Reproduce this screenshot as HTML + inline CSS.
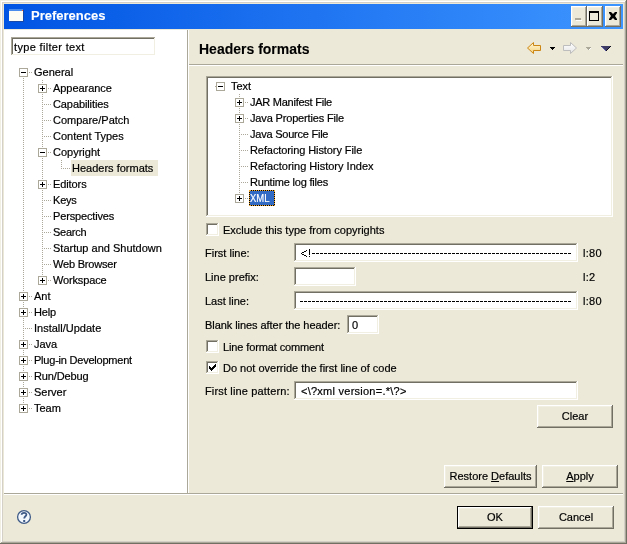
<!DOCTYPE html>
<html><head><meta charset="utf-8"><style>
html,body{margin:0;padding:0;}
body{width:627px;height:544px;position:relative;overflow:hidden;background:#ECE9D8;font-family:"Liberation Sans",sans-serif;}
body>div,body>span,body>svg{position:absolute;box-sizing:border-box;}
body>div{box-sizing:content-box;}
.tl{position:absolute;left:0;top:0;width:627px;height:544px;will-change:transform;}
.tl>span{position:absolute;}
.t{-webkit-text-stroke:0.2px currentColor;white-space:pre;line-height:16px;font-size:11px;color:#000;}
.btn{text-align:center;}
u{text-decoration:underline;text-underline-offset:1px;}
</style></head><body>
<div style="left:0px;top:0px;width:627px;height:544px;background:#716F64;"></div><div style="left:0px;top:0px;width:626px;height:543px;background:#F1EFE2;"></div><div style="left:1px;top:1px;width:625px;height:542px;background:#ACA899;"></div><div style="left:1px;top:1px;width:624px;height:541px;background:#FFFFFF;"></div><div style="left:2px;top:2px;width:623px;height:540px;background:#D4D0C8;"></div><div style="left:3px;top:3px;width:621px;height:538px;background:#ECE9D8;"></div><div style="left:4px;top:4px;width:619px;height:25px;background:#0054E3;background:linear-gradient(to right,#0054E3,#3D95FF);"></div><div style="left:10px;top:10px;width:14px;height:12px;background:#1848A8;"></div><div style="left:9px;top:9px;width:14px;height:2px;background:#4A8CEC;"></div><div style="left:9px;top:11px;width:14px;height:10px;background:#FDFDF6;"></div><div style="left:22px;top:10px;width:1px;height:1px;background:#F06030;"></div><div style="left:571px;top:6px;width:16px;height:21px;background:#716F64;"></div><div style="left:571px;top:6px;width:15px;height:20px;background:#FFFFFF;"></div><div style="left:572px;top:7px;width:14px;height:19px;background:#ACA899;"></div><div style="left:572px;top:7px;width:13px;height:18px;background:#F1EFE2;"></div><div style="left:573px;top:8px;width:12px;height:17px;background:#ECE9D8;"></div><div style="left:587px;top:6px;width:16px;height:21px;background:#716F64;"></div><div style="left:587px;top:6px;width:15px;height:20px;background:#FFFFFF;"></div><div style="left:588px;top:7px;width:14px;height:19px;background:#ACA899;"></div><div style="left:588px;top:7px;width:13px;height:18px;background:#F1EFE2;"></div><div style="left:589px;top:8px;width:12px;height:17px;background:#ECE9D8;"></div><div style="left:605px;top:6px;width:16px;height:21px;background:#716F64;"></div><div style="left:605px;top:6px;width:15px;height:20px;background:#FFFFFF;"></div><div style="left:606px;top:7px;width:14px;height:19px;background:#ACA899;"></div><div style="left:606px;top:7px;width:13px;height:18px;background:#F1EFE2;"></div><div style="left:607px;top:8px;width:12px;height:17px;background:#ECE9D8;"></div><div style="left:575px;top:18px;width:6px;height:2px;background:#ACA899;"></div><div style="left:576px;top:20px;width:6px;height:1px;background:#FFFFFF;"></div><div style="left:589px;top:11px;width:8px;height:7px;border:1px solid #000;border-top-width:2px;"></div><svg style="position:absolute;left:609px;top:12px" width="8" height="8" viewBox="0 0 8 8"><path d="M0 0h2l2 2 2-2h2v1L6 4l2 3v1H6L4 6 2 8H0V7l2-3-2-3z" fill="#000"/></svg><div style="left:4px;top:30px;width:183px;height:463px;background:#fff;"></div><div style="left:187px;top:30px;width:1px;height:463px;background:#ACA899;"></div><div style="left:188px;top:30px;width:1px;height:463px;background:#FFFFFF;"></div><div style="left:4px;top:493px;width:619px;height:1px;background:#ACA899;"></div><div style="left:4px;top:494px;width:619px;height:1px;background:#FFFFFF;"></div><div style="left:11px;top:37px;width:145px;height:19px;background:#FFFFFF;"></div><div style="left:11px;top:37px;width:144px;height:1px;background:#ACA899;"></div><div style="left:11px;top:37px;width:1px;height:18px;background:#ACA899;"></div><div style="left:12px;top:38px;width:143px;height:17px;background:#F1EFE2;"></div><div style="left:12px;top:38px;width:142px;height:1px;background:#716F64;"></div><div style="left:12px;top:38px;width:1px;height:16px;background:#716F64;"></div><div style="left:13px;top:39px;width:141px;height:15px;background:#fff;"></div><svg style="position:absolute;left:0;top:0" width="627" height="544" viewBox="0 0 627 544" shape-rendering="crispEdges"><path d="M23 72h1v1h-1zM23 74h1v1h-1zM23 76h1v1h-1zM23 78h1v1h-1zM23 80h1v1h-1zM23 82h1v1h-1zM23 84h1v1h-1zM23 86h1v1h-1zM23 88h1v1h-1zM23 90h1v1h-1zM23 92h1v1h-1zM23 94h1v1h-1zM23 96h1v1h-1zM23 98h1v1h-1zM23 100h1v1h-1zM23 102h1v1h-1zM23 104h1v1h-1zM23 106h1v1h-1zM23 108h1v1h-1zM23 110h1v1h-1zM23 112h1v1h-1zM23 114h1v1h-1zM23 116h1v1h-1zM23 118h1v1h-1zM23 120h1v1h-1zM23 122h1v1h-1zM23 124h1v1h-1zM23 126h1v1h-1zM23 128h1v1h-1zM23 130h1v1h-1zM23 132h1v1h-1zM23 134h1v1h-1zM23 136h1v1h-1zM23 138h1v1h-1zM23 140h1v1h-1zM23 142h1v1h-1zM23 144h1v1h-1zM23 146h1v1h-1zM23 148h1v1h-1zM23 150h1v1h-1zM23 152h1v1h-1zM23 154h1v1h-1zM23 156h1v1h-1zM23 158h1v1h-1zM23 160h1v1h-1zM23 162h1v1h-1zM23 164h1v1h-1zM23 166h1v1h-1zM23 168h1v1h-1zM23 170h1v1h-1zM23 172h1v1h-1zM23 174h1v1h-1zM23 176h1v1h-1zM23 178h1v1h-1zM23 180h1v1h-1zM23 182h1v1h-1zM23 184h1v1h-1zM23 186h1v1h-1zM23 188h1v1h-1zM23 190h1v1h-1zM23 192h1v1h-1zM23 194h1v1h-1zM23 196h1v1h-1zM23 198h1v1h-1zM23 200h1v1h-1zM23 202h1v1h-1zM23 204h1v1h-1zM23 206h1v1h-1zM23 208h1v1h-1zM23 210h1v1h-1zM23 212h1v1h-1zM23 214h1v1h-1zM23 216h1v1h-1zM23 218h1v1h-1zM23 220h1v1h-1zM23 222h1v1h-1zM23 224h1v1h-1zM23 226h1v1h-1zM23 228h1v1h-1zM23 230h1v1h-1zM23 232h1v1h-1zM23 234h1v1h-1zM23 236h1v1h-1zM23 238h1v1h-1zM23 240h1v1h-1zM23 242h1v1h-1zM23 244h1v1h-1zM23 246h1v1h-1zM23 248h1v1h-1zM23 250h1v1h-1zM23 252h1v1h-1zM23 254h1v1h-1zM23 256h1v1h-1zM23 258h1v1h-1zM23 260h1v1h-1zM23 262h1v1h-1zM23 264h1v1h-1zM23 266h1v1h-1zM23 268h1v1h-1zM23 270h1v1h-1zM23 272h1v1h-1zM23 274h1v1h-1zM23 276h1v1h-1zM23 278h1v1h-1zM23 280h1v1h-1zM23 282h1v1h-1zM23 284h1v1h-1zM23 286h1v1h-1zM23 288h1v1h-1zM23 290h1v1h-1zM23 292h1v1h-1zM23 294h1v1h-1zM23 296h1v1h-1zM23 298h1v1h-1zM23 300h1v1h-1zM23 302h1v1h-1zM23 304h1v1h-1zM23 306h1v1h-1zM23 308h1v1h-1zM23 310h1v1h-1zM23 312h1v1h-1zM23 314h1v1h-1zM23 316h1v1h-1zM23 318h1v1h-1zM23 320h1v1h-1zM23 322h1v1h-1zM23 324h1v1h-1zM23 326h1v1h-1zM23 328h1v1h-1zM23 330h1v1h-1zM23 332h1v1h-1zM23 334h1v1h-1zM23 336h1v1h-1zM23 338h1v1h-1zM23 340h1v1h-1zM23 342h1v1h-1zM23 344h1v1h-1zM23 346h1v1h-1zM23 348h1v1h-1zM23 350h1v1h-1zM23 352h1v1h-1zM23 354h1v1h-1zM23 356h1v1h-1zM23 358h1v1h-1zM23 360h1v1h-1zM23 362h1v1h-1zM23 364h1v1h-1zM23 366h1v1h-1zM23 368h1v1h-1zM23 370h1v1h-1zM23 372h1v1h-1zM23 374h1v1h-1zM23 376h1v1h-1zM23 378h1v1h-1zM23 380h1v1h-1zM23 382h1v1h-1zM23 384h1v1h-1zM23 386h1v1h-1zM23 388h1v1h-1zM23 390h1v1h-1zM23 392h1v1h-1zM23 394h1v1h-1zM23 396h1v1h-1zM23 398h1v1h-1zM23 400h1v1h-1zM23 402h1v1h-1zM23 404h1v1h-1zM23 406h1v1h-1zM23 408h1v1h-1zM42 80h1v1h-1zM42 82h1v1h-1zM42 84h1v1h-1zM42 86h1v1h-1zM42 88h1v1h-1zM42 90h1v1h-1zM42 92h1v1h-1zM42 94h1v1h-1zM42 96h1v1h-1zM42 98h1v1h-1zM42 100h1v1h-1zM42 102h1v1h-1zM42 104h1v1h-1zM42 106h1v1h-1zM42 108h1v1h-1zM42 110h1v1h-1zM42 112h1v1h-1zM42 114h1v1h-1zM42 116h1v1h-1zM42 118h1v1h-1zM42 120h1v1h-1zM42 122h1v1h-1zM42 124h1v1h-1zM42 126h1v1h-1zM42 128h1v1h-1zM42 130h1v1h-1zM42 132h1v1h-1zM42 134h1v1h-1zM42 136h1v1h-1zM42 138h1v1h-1zM42 140h1v1h-1zM42 142h1v1h-1zM42 144h1v1h-1zM42 146h1v1h-1zM42 148h1v1h-1zM42 150h1v1h-1zM42 152h1v1h-1zM42 154h1v1h-1zM42 156h1v1h-1zM42 158h1v1h-1zM42 160h1v1h-1zM42 162h1v1h-1zM42 164h1v1h-1zM42 166h1v1h-1zM42 168h1v1h-1zM42 170h1v1h-1zM42 172h1v1h-1zM42 174h1v1h-1zM42 176h1v1h-1zM42 178h1v1h-1zM42 180h1v1h-1zM42 182h1v1h-1zM42 184h1v1h-1zM42 186h1v1h-1zM42 188h1v1h-1zM42 190h1v1h-1zM42 192h1v1h-1zM42 194h1v1h-1zM42 196h1v1h-1zM42 198h1v1h-1zM42 200h1v1h-1zM42 202h1v1h-1zM42 204h1v1h-1zM42 206h1v1h-1zM42 208h1v1h-1zM42 210h1v1h-1zM42 212h1v1h-1zM42 214h1v1h-1zM42 216h1v1h-1zM42 218h1v1h-1zM42 220h1v1h-1zM42 222h1v1h-1zM42 224h1v1h-1zM42 226h1v1h-1zM42 228h1v1h-1zM42 230h1v1h-1zM42 232h1v1h-1zM42 234h1v1h-1zM42 236h1v1h-1zM42 238h1v1h-1zM42 240h1v1h-1zM42 242h1v1h-1zM42 244h1v1h-1zM42 246h1v1h-1zM42 248h1v1h-1zM42 250h1v1h-1zM42 252h1v1h-1zM42 254h1v1h-1zM42 256h1v1h-1zM42 258h1v1h-1zM42 260h1v1h-1zM42 262h1v1h-1zM42 264h1v1h-1zM42 266h1v1h-1zM42 268h1v1h-1zM42 270h1v1h-1zM42 272h1v1h-1zM42 274h1v1h-1zM42 276h1v1h-1zM42 278h1v1h-1zM42 280h1v1h-1zM61 160h1v1h-1zM61 162h1v1h-1zM61 164h1v1h-1zM61 166h1v1h-1zM61 168h1v1h-1zM29 72h1v1h-1zM31 72h1v1h-1zM48 88h1v1h-1zM50 88h1v1h-1zM42 104h1v1h-1zM44 104h1v1h-1zM46 104h1v1h-1zM48 104h1v1h-1zM50 104h1v1h-1zM42 120h1v1h-1zM44 120h1v1h-1zM46 120h1v1h-1zM48 120h1v1h-1zM50 120h1v1h-1zM42 136h1v1h-1zM44 136h1v1h-1zM46 136h1v1h-1zM48 136h1v1h-1zM50 136h1v1h-1zM48 152h1v1h-1zM50 152h1v1h-1zM61 168h1v1h-1zM63 168h1v1h-1zM65 168h1v1h-1zM67 168h1v1h-1zM69 168h1v1h-1zM48 184h1v1h-1zM50 184h1v1h-1zM42 200h1v1h-1zM44 200h1v1h-1zM46 200h1v1h-1zM48 200h1v1h-1zM50 200h1v1h-1zM42 216h1v1h-1zM44 216h1v1h-1zM46 216h1v1h-1zM48 216h1v1h-1zM50 216h1v1h-1zM42 232h1v1h-1zM44 232h1v1h-1zM46 232h1v1h-1zM48 232h1v1h-1zM50 232h1v1h-1zM42 248h1v1h-1zM44 248h1v1h-1zM46 248h1v1h-1zM48 248h1v1h-1zM50 248h1v1h-1zM42 264h1v1h-1zM44 264h1v1h-1zM46 264h1v1h-1zM48 264h1v1h-1zM50 264h1v1h-1zM48 280h1v1h-1zM50 280h1v1h-1zM29 296h1v1h-1zM31 296h1v1h-1zM29 312h1v1h-1zM31 312h1v1h-1zM23 328h1v1h-1zM25 328h1v1h-1zM27 328h1v1h-1zM29 328h1v1h-1zM31 328h1v1h-1zM29 344h1v1h-1zM31 344h1v1h-1zM29 360h1v1h-1zM31 360h1v1h-1zM29 376h1v1h-1zM31 376h1v1h-1zM29 392h1v1h-1zM31 392h1v1h-1zM29 408h1v1h-1zM31 408h1v1h-1z" fill="#ACA899"/></svg><div style="left:19px;top:68px;width:9px;height:9px;background:#ACA899;"></div><div style="left:20px;top:69px;width:7px;height:7px;background:#fff;"></div><div style="left:21px;top:72px;width:5px;height:1px;background:#000;"></div><div style="left:38px;top:84px;width:9px;height:9px;background:#ACA899;"></div><div style="left:39px;top:85px;width:7px;height:7px;background:#fff;"></div><div style="left:40px;top:88px;width:5px;height:1px;background:#000;"></div><div style="left:42px;top:86px;width:1px;height:5px;background:#000;"></div><div style="left:38px;top:148px;width:9px;height:9px;background:#ACA899;"></div><div style="left:39px;top:149px;width:7px;height:7px;background:#fff;"></div><div style="left:40px;top:152px;width:5px;height:1px;background:#000;"></div><div style="left:71px;top:160px;width:87px;height:16px;background:#ECE9D8;"></div><div style="left:38px;top:180px;width:9px;height:9px;background:#ACA899;"></div><div style="left:39px;top:181px;width:7px;height:7px;background:#fff;"></div><div style="left:40px;top:184px;width:5px;height:1px;background:#000;"></div><div style="left:42px;top:182px;width:1px;height:5px;background:#000;"></div><div style="left:38px;top:276px;width:9px;height:9px;background:#ACA899;"></div><div style="left:39px;top:277px;width:7px;height:7px;background:#fff;"></div><div style="left:40px;top:280px;width:5px;height:1px;background:#000;"></div><div style="left:42px;top:278px;width:1px;height:5px;background:#000;"></div><div style="left:19px;top:292px;width:9px;height:9px;background:#ACA899;"></div><div style="left:20px;top:293px;width:7px;height:7px;background:#fff;"></div><div style="left:21px;top:296px;width:5px;height:1px;background:#000;"></div><div style="left:23px;top:294px;width:1px;height:5px;background:#000;"></div><div style="left:19px;top:308px;width:9px;height:9px;background:#ACA899;"></div><div style="left:20px;top:309px;width:7px;height:7px;background:#fff;"></div><div style="left:21px;top:312px;width:5px;height:1px;background:#000;"></div><div style="left:23px;top:310px;width:1px;height:5px;background:#000;"></div><div style="left:19px;top:340px;width:9px;height:9px;background:#ACA899;"></div><div style="left:20px;top:341px;width:7px;height:7px;background:#fff;"></div><div style="left:21px;top:344px;width:5px;height:1px;background:#000;"></div><div style="left:23px;top:342px;width:1px;height:5px;background:#000;"></div><div style="left:19px;top:356px;width:9px;height:9px;background:#ACA899;"></div><div style="left:20px;top:357px;width:7px;height:7px;background:#fff;"></div><div style="left:21px;top:360px;width:5px;height:1px;background:#000;"></div><div style="left:23px;top:358px;width:1px;height:5px;background:#000;"></div><div style="left:19px;top:372px;width:9px;height:9px;background:#ACA899;"></div><div style="left:20px;top:373px;width:7px;height:7px;background:#fff;"></div><div style="left:21px;top:376px;width:5px;height:1px;background:#000;"></div><div style="left:23px;top:374px;width:1px;height:5px;background:#000;"></div><div style="left:19px;top:388px;width:9px;height:9px;background:#ACA899;"></div><div style="left:20px;top:389px;width:7px;height:7px;background:#fff;"></div><div style="left:21px;top:392px;width:5px;height:1px;background:#000;"></div><div style="left:23px;top:390px;width:1px;height:5px;background:#000;"></div><div style="left:19px;top:404px;width:9px;height:9px;background:#ACA899;"></div><div style="left:20px;top:405px;width:7px;height:7px;background:#fff;"></div><div style="left:21px;top:408px;width:5px;height:1px;background:#000;"></div><div style="left:23px;top:406px;width:1px;height:5px;background:#000;"></div><div style="left:189px;top:64px;width:434px;height:1px;background:#ACA899;"></div><div style="left:189px;top:65px;width:434px;height:1px;background:#FFFFFF;"></div><div style="left:206px;top:76px;width:407px;height:141px;background:#FFFFFF;"></div><div style="left:206px;top:76px;width:406px;height:1px;background:#ACA899;"></div><div style="left:206px;top:76px;width:1px;height:140px;background:#ACA899;"></div><div style="left:207px;top:77px;width:405px;height:139px;background:#F1EFE2;"></div><div style="left:207px;top:77px;width:404px;height:1px;background:#716F64;"></div><div style="left:207px;top:77px;width:1px;height:138px;background:#716F64;"></div><div style="left:208px;top:78px;width:403px;height:137px;background:#fff;"></div><svg style="position:absolute;left:0;top:0" width="627" height="544" viewBox="0 0 627 544" shape-rendering="crispEdges"><path d="M215 86h1v1h-1zM239 94h1v1h-1zM239 96h1v1h-1zM239 98h1v1h-1zM239 100h1v1h-1zM239 102h1v1h-1zM239 104h1v1h-1zM239 106h1v1h-1zM239 108h1v1h-1zM239 110h1v1h-1zM239 112h1v1h-1zM239 114h1v1h-1zM239 116h1v1h-1zM239 118h1v1h-1zM239 120h1v1h-1zM239 122h1v1h-1zM239 124h1v1h-1zM239 126h1v1h-1zM239 128h1v1h-1zM239 130h1v1h-1zM239 132h1v1h-1zM239 134h1v1h-1zM239 136h1v1h-1zM239 138h1v1h-1zM239 140h1v1h-1zM239 142h1v1h-1zM239 144h1v1h-1zM239 146h1v1h-1zM239 148h1v1h-1zM239 150h1v1h-1zM239 152h1v1h-1zM239 154h1v1h-1zM239 156h1v1h-1zM239 158h1v1h-1zM239 160h1v1h-1zM239 162h1v1h-1zM239 164h1v1h-1zM239 166h1v1h-1zM239 168h1v1h-1zM239 170h1v1h-1zM239 172h1v1h-1zM239 174h1v1h-1zM239 176h1v1h-1zM239 178h1v1h-1zM239 180h1v1h-1zM239 182h1v1h-1zM239 184h1v1h-1zM239 186h1v1h-1zM239 188h1v1h-1zM239 190h1v1h-1zM239 192h1v1h-1zM239 194h1v1h-1zM245 102h1v1h-1zM247 102h1v1h-1zM245 118h1v1h-1zM247 118h1v1h-1zM239 134h1v1h-1zM241 134h1v1h-1zM243 134h1v1h-1zM245 134h1v1h-1zM247 134h1v1h-1zM239 150h1v1h-1zM241 150h1v1h-1zM243 150h1v1h-1zM245 150h1v1h-1zM247 150h1v1h-1zM239 166h1v1h-1zM241 166h1v1h-1zM243 166h1v1h-1zM245 166h1v1h-1zM247 166h1v1h-1zM239 182h1v1h-1zM241 182h1v1h-1zM243 182h1v1h-1zM245 182h1v1h-1zM247 182h1v1h-1zM245 198h1v1h-1zM247 198h1v1h-1z" fill="#ACA899"/></svg><div style="left:216px;top:82px;width:9px;height:9px;background:#ACA899;"></div><div style="left:217px;top:83px;width:7px;height:7px;background:#fff;"></div><div style="left:218px;top:86px;width:5px;height:1px;background:#000;"></div><div style="left:235px;top:98px;width:9px;height:9px;background:#ACA899;"></div><div style="left:236px;top:99px;width:7px;height:7px;background:#fff;"></div><div style="left:237px;top:102px;width:5px;height:1px;background:#000;"></div><div style="left:239px;top:100px;width:1px;height:5px;background:#000;"></div><div style="left:235px;top:114px;width:9px;height:9px;background:#ACA899;"></div><div style="left:236px;top:115px;width:7px;height:7px;background:#fff;"></div><div style="left:237px;top:118px;width:5px;height:1px;background:#000;"></div><div style="left:239px;top:116px;width:1px;height:5px;background:#000;"></div><div style="left:235px;top:194px;width:9px;height:9px;background:#ACA899;"></div><div style="left:236px;top:195px;width:7px;height:7px;background:#fff;"></div><div style="left:237px;top:198px;width:5px;height:1px;background:#000;"></div><div style="left:239px;top:196px;width:1px;height:5px;background:#000;"></div><div style="left:249px;top:190px;width:26px;height:16px;background:#000;"></div><div style="left:249px;top:190px;width:24px;height:14px;border:1px dotted #F0A830;background:#316AC5;background-clip:padding-box;"></div><div style="left:206px;top:223px;width:13px;height:13px;background:#FFFFFF;"></div><div style="left:206px;top:223px;width:12px;height:1px;background:#ACA899;"></div><div style="left:206px;top:223px;width:1px;height:12px;background:#ACA899;"></div><div style="left:207px;top:224px;width:11px;height:11px;background:#F1EFE2;"></div><div style="left:207px;top:224px;width:10px;height:1px;background:#716F64;"></div><div style="left:207px;top:224px;width:1px;height:10px;background:#716F64;"></div><div style="left:208px;top:225px;width:9px;height:9px;background:#fff;"></div><div style="left:294px;top:243px;width:284px;height:19px;background:#FFFFFF;"></div><div style="left:294px;top:243px;width:283px;height:1px;background:#ACA899;"></div><div style="left:294px;top:243px;width:1px;height:18px;background:#ACA899;"></div><div style="left:295px;top:244px;width:282px;height:17px;background:#F1EFE2;"></div><div style="left:295px;top:244px;width:281px;height:1px;background:#716F64;"></div><div style="left:295px;top:244px;width:1px;height:16px;background:#716F64;"></div><div style="left:296px;top:245px;width:280px;height:15px;background:#fff;"></div><div style="left:301px;top:253px;width:1px;height:1px;background:#000;"></div><div style="left:302px;top:252px;width:2px;height:1px;background:#000;"></div><div style="left:304px;top:251px;width:2px;height:1px;background:#000;"></div><div style="left:306px;top:250px;width:1px;height:1px;background:#000;"></div><div style="left:302px;top:254px;width:2px;height:1px;background:#000;"></div><div style="left:304px;top:255px;width:2px;height:1px;background:#000;"></div><div style="left:306px;top:256px;width:1px;height:1px;background:#000;"></div><div style="left:309px;top:249px;width:1px;height:1px;background:#000;"></div><div style="left:309px;top:250px;width:1px;height:1px;background:#000;"></div><div style="left:309px;top:251px;width:1px;height:1px;background:#000;"></div><div style="left:309px;top:252px;width:1px;height:1px;background:#000;"></div><div style="left:309px;top:253px;width:1px;height:1px;background:#000;"></div><div style="left:309px;top:254px;width:1px;height:1px;background:#000;"></div><div style="left:309px;top:256px;width:1px;height:1px;background:#000;"></div><div style="left:312px;top:253px;width:260px;height:1px;background:#000;background:repeating-linear-gradient(to right,#000 0 3px,transparent 3px 4px);"></div><div style="left:294px;top:267px;width:62px;height:19px;background:#FFFFFF;"></div><div style="left:294px;top:267px;width:61px;height:1px;background:#ACA899;"></div><div style="left:294px;top:267px;width:1px;height:18px;background:#ACA899;"></div><div style="left:295px;top:268px;width:60px;height:17px;background:#F1EFE2;"></div><div style="left:295px;top:268px;width:59px;height:1px;background:#716F64;"></div><div style="left:295px;top:268px;width:1px;height:16px;background:#716F64;"></div><div style="left:296px;top:269px;width:58px;height:15px;background:#fff;"></div><div style="left:294px;top:291px;width:284px;height:19px;background:#FFFFFF;"></div><div style="left:294px;top:291px;width:283px;height:1px;background:#ACA899;"></div><div style="left:294px;top:291px;width:1px;height:18px;background:#ACA899;"></div><div style="left:295px;top:292px;width:282px;height:17px;background:#F1EFE2;"></div><div style="left:295px;top:292px;width:281px;height:1px;background:#716F64;"></div><div style="left:295px;top:292px;width:1px;height:16px;background:#716F64;"></div><div style="left:296px;top:293px;width:280px;height:15px;background:#fff;"></div><div style="left:300px;top:301px;width:272px;height:1px;background:#000;background:repeating-linear-gradient(to right,#000 0 3px,transparent 3px 4px);"></div><div style="left:347px;top:315px;width:32px;height:19px;background:#FFFFFF;"></div><div style="left:347px;top:315px;width:31px;height:1px;background:#ACA899;"></div><div style="left:347px;top:315px;width:1px;height:18px;background:#ACA899;"></div><div style="left:348px;top:316px;width:30px;height:17px;background:#F1EFE2;"></div><div style="left:348px;top:316px;width:29px;height:1px;background:#716F64;"></div><div style="left:348px;top:316px;width:1px;height:16px;background:#716F64;"></div><div style="left:349px;top:317px;width:28px;height:15px;background:#fff;"></div><div style="left:206px;top:340px;width:13px;height:13px;background:#FFFFFF;"></div><div style="left:206px;top:340px;width:12px;height:1px;background:#ACA899;"></div><div style="left:206px;top:340px;width:1px;height:12px;background:#ACA899;"></div><div style="left:207px;top:341px;width:11px;height:11px;background:#F1EFE2;"></div><div style="left:207px;top:341px;width:10px;height:1px;background:#716F64;"></div><div style="left:207px;top:341px;width:1px;height:10px;background:#716F64;"></div><div style="left:208px;top:342px;width:9px;height:9px;background:#fff;"></div><div style="left:206px;top:361px;width:13px;height:13px;background:#FFFFFF;"></div><div style="left:206px;top:361px;width:12px;height:1px;background:#ACA899;"></div><div style="left:206px;top:361px;width:1px;height:12px;background:#ACA899;"></div><div style="left:207px;top:362px;width:11px;height:11px;background:#F1EFE2;"></div><div style="left:207px;top:362px;width:10px;height:1px;background:#716F64;"></div><div style="left:207px;top:362px;width:1px;height:10px;background:#716F64;"></div><div style="left:208px;top:363px;width:9px;height:9px;background:#fff;"></div><svg style="position:absolute;left:209px;top:364px" width="7" height="7" viewBox="0 0 7 7"><path d="M0 2h1v1h1v1h1V3h1V2h1V1h1V0h1v3H6v1H5v1H4v1H3v1H2V6H1V5H0z" fill="#000"/></svg><div style="left:294px;top:381px;width:284px;height:19px;background:#FFFFFF;"></div><div style="left:294px;top:381px;width:283px;height:1px;background:#ACA899;"></div><div style="left:294px;top:381px;width:1px;height:18px;background:#ACA899;"></div><div style="left:295px;top:382px;width:282px;height:17px;background:#F1EFE2;"></div><div style="left:295px;top:382px;width:281px;height:1px;background:#716F64;"></div><div style="left:295px;top:382px;width:1px;height:16px;background:#716F64;"></div><div style="left:296px;top:383px;width:280px;height:15px;background:#fff;"></div><div style="left:537px;top:405px;width:76px;height:23px;background:#716F64;"></div><div style="left:537px;top:405px;width:75px;height:22px;background:#FFFFFF;"></div><div style="left:538px;top:406px;width:74px;height:21px;background:#ACA899;"></div><div style="left:538px;top:406px;width:73px;height:20px;background:#F1EFE2;"></div><div style="left:539px;top:407px;width:72px;height:19px;background:#ECE9D8;"></div><div style="left:444px;top:465px;width:93px;height:23px;background:#716F64;"></div><div style="left:444px;top:465px;width:92px;height:22px;background:#FFFFFF;"></div><div style="left:445px;top:466px;width:91px;height:21px;background:#ACA899;"></div><div style="left:445px;top:466px;width:90px;height:20px;background:#F1EFE2;"></div><div style="left:446px;top:467px;width:89px;height:19px;background:#ECE9D8;"></div><div style="left:542px;top:465px;width:76px;height:23px;background:#716F64;"></div><div style="left:542px;top:465px;width:75px;height:22px;background:#FFFFFF;"></div><div style="left:543px;top:466px;width:74px;height:21px;background:#ACA899;"></div><div style="left:543px;top:466px;width:73px;height:20px;background:#F1EFE2;"></div><div style="left:544px;top:467px;width:72px;height:19px;background:#ECE9D8;"></div><div style="left:457px;top:506px;width:76px;height:23px;background:#000;"></div><div style="left:458px;top:507px;width:74px;height:21px;background:#716F64;"></div><div style="left:458px;top:507px;width:73px;height:20px;background:#FFFFFF;"></div><div style="left:459px;top:508px;width:72px;height:19px;background:#ACA899;"></div><div style="left:459px;top:508px;width:71px;height:18px;background:#F1EFE2;"></div><div style="left:460px;top:509px;width:70px;height:17px;background:#ECE9D8;"></div><div style="left:538px;top:506px;width:76px;height:23px;background:#716F64;"></div><div style="left:538px;top:506px;width:75px;height:22px;background:#FFFFFF;"></div><div style="left:539px;top:507px;width:74px;height:21px;background:#ACA899;"></div><div style="left:539px;top:507px;width:73px;height:20px;background:#F1EFE2;"></div><div style="left:540px;top:508px;width:72px;height:19px;background:#ECE9D8;"></div><svg style="position:absolute;left:524px;top:39px" width="20" height="18" viewBox="524 39 20 18"><defs><linearGradient id="ga" x1="0" y1="0" x2="0" y2="1"><stop offset="0" stop-color="#FFF9DC"/><stop offset="1" stop-color="#F6D27A"/></linearGradient><linearGradient id="gb" x1="0" y1="0" x2="0" y2="1"><stop offset="0" stop-color="#FFFFFF"/><stop offset="1" stop-color="#E4E4E4"/></linearGradient></defs><path d="M527.5 48 L533.5 42.5 V45.5 H540.5 V50.5 H533.5 V53.5 Z" fill="url(#ga)" stroke="#CC8614" stroke-width="1"/></svg><div style="left:550px;top:47px;width:5px;height:1px;background:#000;"></div><div style="left:551px;top:48px;width:3px;height:1px;background:#000;"></div><div style="left:552px;top:49px;width:1px;height:1px;background:#000;"></div><svg style="position:absolute;left:560px;top:39px" width="20" height="18" viewBox="560 39 20 18"><path d="M576.5 48 L570.5 42.5 V45.5 H563.5 V50.5 H570.5 V53.5 Z" fill="url(#gb)" stroke="#BDBDBD" stroke-width="1"/></svg><div style="left:586px;top:47px;width:5px;height:1px;background:#ACA899;"></div><div style="left:587px;top:48px;width:3px;height:1px;background:#ACA899;"></div><div style="left:588px;top:49px;width:1px;height:1px;background:#ACA899;"></div><div style="left:590px;top:48px;width:1px;height:1px;background:#FFFFFF;"></div><div style="left:589px;top:49px;width:1px;height:1px;background:#FFFFFF;"></div><div style="left:601px;top:46px;width:10px;height:1px;background:#3E3C64;"></div><div style="left:602px;top:47px;width:8px;height:1px;background:#3E3C64;"></div><div style="left:603px;top:48px;width:6px;height:1px;background:#3E3C64;"></div><div style="left:604px;top:49px;width:4px;height:1px;background:#3E3C64;"></div><div style="left:605px;top:50px;width:2px;height:1px;background:#3E3C64;"></div><div style="left:602px;top:47px;width:1px;height:1px;background:#5A58A8;"></div><div style="left:603px;top:48px;width:1px;height:1px;background:#5A58A8;"></div><div style="left:604px;top:49px;width:1px;height:1px;background:#5A58A8;"></div><div style="left:605px;top:50px;width:1px;height:1px;background:#5A58A8;"></div><div style="left:610px;top:46px;width:1px;height:1px;background:#101020;"></div><div style="left:609px;top:47px;width:1px;height:1px;background:#101020;"></div><div style="left:608px;top:48px;width:1px;height:1px;background:#101020;"></div><div style="left:607px;top:49px;width:1px;height:1px;background:#101020;"></div><div style="left:606px;top:50px;width:1px;height:1px;background:#101020;"></div><svg style="position:absolute;left:16px;top:509px" width="16" height="16" viewBox="16 509 16 16"><circle cx="24" cy="517" r="6.4" fill="#F2F7FE" stroke="#3E5A86" stroke-width="1.3"/><path d="M21.6 514.8 C21.8 512.4 26.4 512.2 26.4 514.6 C26.4 516.2 24.2 516.4 24.2 518.6" fill="none" stroke="#3E5A86" stroke-width="1.8"/><rect x="23.2" y="520" width="2" height="2" fill="#3E5A86"/></svg><div class="tl"><span class="t" style="left:31px;top:8px;font-size:13px;font-weight:bold;color:#fff;-webkit-text-stroke-width:0.1px;">Preferences</span><span class="t" style="left:14px;top:39px;font-size:11px;font-weight:normal;color:#000;letter-spacing:0.33px;">type filter text</span><span class="t" style="left:34px;top:64px;font-size:11px;font-weight:normal;color:#000;">General</span><span class="t" style="left:53px;top:80px;font-size:11px;font-weight:normal;color:#000;letter-spacing:-0.05px;">Appearance</span><span class="t" style="left:53px;top:96px;font-size:11px;font-weight:normal;color:#000;letter-spacing:-0.1px;">Capabilities</span><span class="t" style="left:53px;top:112px;font-size:11px;font-weight:normal;color:#000;">Compare/Patch</span><span class="t" style="left:53px;top:128px;font-size:11px;font-weight:normal;color:#000;">Content Types</span><span class="t" style="left:53px;top:144px;font-size:11px;font-weight:normal;color:#000;">Copyright</span><span class="t" style="left:72px;top:160px;font-size:11px;font-weight:normal;color:#000;">Headers formats</span><span class="t" style="left:53px;top:176px;font-size:11px;font-weight:normal;color:#000;letter-spacing:-0.1px;">Editors</span><span class="t" style="left:53px;top:192px;font-size:11px;font-weight:normal;color:#000;letter-spacing:-0.2px;">Keys</span><span class="t" style="left:53px;top:208px;font-size:11px;font-weight:normal;color:#000;letter-spacing:-0.15px;">Perspectives</span><span class="t" style="left:53px;top:224px;font-size:11px;font-weight:normal;color:#000;letter-spacing:-0.25px;">Search</span><span class="t" style="left:53px;top:240px;font-size:11px;font-weight:normal;color:#000;">Startup and Shutdown</span><span class="t" style="left:53px;top:256px;font-size:11px;font-weight:normal;color:#000;letter-spacing:-0.2px;">Web Browser</span><span class="t" style="left:53px;top:272px;font-size:11px;font-weight:normal;color:#000;letter-spacing:-0.15px;">Workspace</span><span class="t" style="left:34px;top:288px;font-size:11px;font-weight:normal;color:#000;">Ant</span><span class="t" style="left:34px;top:304px;font-size:11px;font-weight:normal;color:#000;letter-spacing:-0.2px;">Help</span><span class="t" style="left:34px;top:320px;font-size:11px;font-weight:normal;color:#000;">Install/Update</span><span class="t" style="left:34px;top:336px;font-size:11px;font-weight:normal;color:#000;">Java</span><span class="t" style="left:34px;top:352px;font-size:11px;font-weight:normal;color:#000;letter-spacing:-0.22px;">Plug-in Development</span><span class="t" style="left:34px;top:368px;font-size:11px;font-weight:normal;color:#000;letter-spacing:-0.13px;">Run/Debug</span><span class="t" style="left:34px;top:384px;font-size:11px;font-weight:normal;color:#000;">Server</span><span class="t" style="left:34px;top:400px;font-size:11px;font-weight:normal;color:#000;">Team</span><span class="t" style="left:199px;top:41px;font-size:14px;font-weight:bold;color:#000;-webkit-text-stroke-width:0.1px;">Headers formats</span><span class="t" style="left:231px;top:78px;font-size:11px;font-weight:normal;color:#000;">Text</span><span class="t" style="left:250px;top:94px;font-size:11px;font-weight:normal;color:#000;letter-spacing:-0.25px;">JAR Manifest File</span><span class="t" style="left:250px;top:110px;font-size:11px;font-weight:normal;color:#000;letter-spacing:-0.16px;">Java Properties File</span><span class="t" style="left:250px;top:126px;font-size:11px;font-weight:normal;color:#000;letter-spacing:-0.23px;">Java Source File</span><span class="t" style="left:250px;top:142px;font-size:11px;font-weight:normal;color:#000;letter-spacing:-0.09px;">Refactoring History File</span><span class="t" style="left:250px;top:158px;font-size:11px;font-weight:normal;color:#000;">Refactoring History Index</span><span class="t" style="left:250px;top:174px;font-size:11px;font-weight:normal;color:#000;letter-spacing:-0.19px;">Runtime log files</span><span class="t" style="left:250px;top:190px;font-size:11px;font-weight:normal;color:#fff;display:inline-block;transform:scaleX(0.86);transform-origin:0 0;">XML</span><span class="t" style="left:223px;top:222px;font-size:11px;font-weight:normal;color:#000;">Exclude this type from copyrights</span><span class="t" style="left:205px;top:245px;font-size:11px;font-weight:normal;color:#000;">First line:</span><span class="t" style="left:583px;top:245px;font-size:11px;font-weight:normal;color:#000;letter-spacing:0.3px;">l:80</span><span class="t" style="left:205px;top:269px;font-size:11px;font-weight:normal;color:#000;">Line prefix:</span><span class="t" style="left:583px;top:269px;font-size:11px;font-weight:normal;color:#000;letter-spacing:0.3px;">l:2</span><span class="t" style="left:205px;top:293px;font-size:11px;font-weight:normal;color:#000;">Last line:</span><span class="t" style="left:583px;top:293px;font-size:11px;font-weight:normal;color:#000;letter-spacing:0.3px;">l:80</span><span class="t" style="left:205px;top:317px;font-size:11px;font-weight:normal;color:#000;letter-spacing:-0.06px;">Blank lines after the header:</span><span class="t" style="left:352px;top:317px;font-size:11px;font-weight:normal;color:#000;">0</span><span class="t" style="left:223px;top:339px;font-size:11px;font-weight:normal;color:#000;letter-spacing:-0.12px;">Line format comment</span><span class="t" style="left:223px;top:360px;font-size:11px;font-weight:normal;color:#000;">Do not override the first line of code</span><span class="t" style="left:205px;top:383px;font-size:11px;font-weight:normal;color:#000;letter-spacing:0.15px;">First line pattern:</span><span class="t" style="left:301px;top:383px;font-size:11px;font-weight:normal;color:#000;letter-spacing:0.25px;">&lt;\?xml version=.*\?&gt;</span><span class="t btn" style="left:537px;top:408px;width:76px;">Clear</span><span class="t btn" style="left:444px;top:468px;width:93px;">Restore <u>D</u>efaults</span><span class="t btn" style="left:542px;top:468px;width:76px;"><u>A</u>pply</span><span class="t btn" style="left:457px;top:509px;width:76px;">OK</span><span class="t btn" style="left:538px;top:509px;width:76px;">Cancel</span></div>
</body></html>
